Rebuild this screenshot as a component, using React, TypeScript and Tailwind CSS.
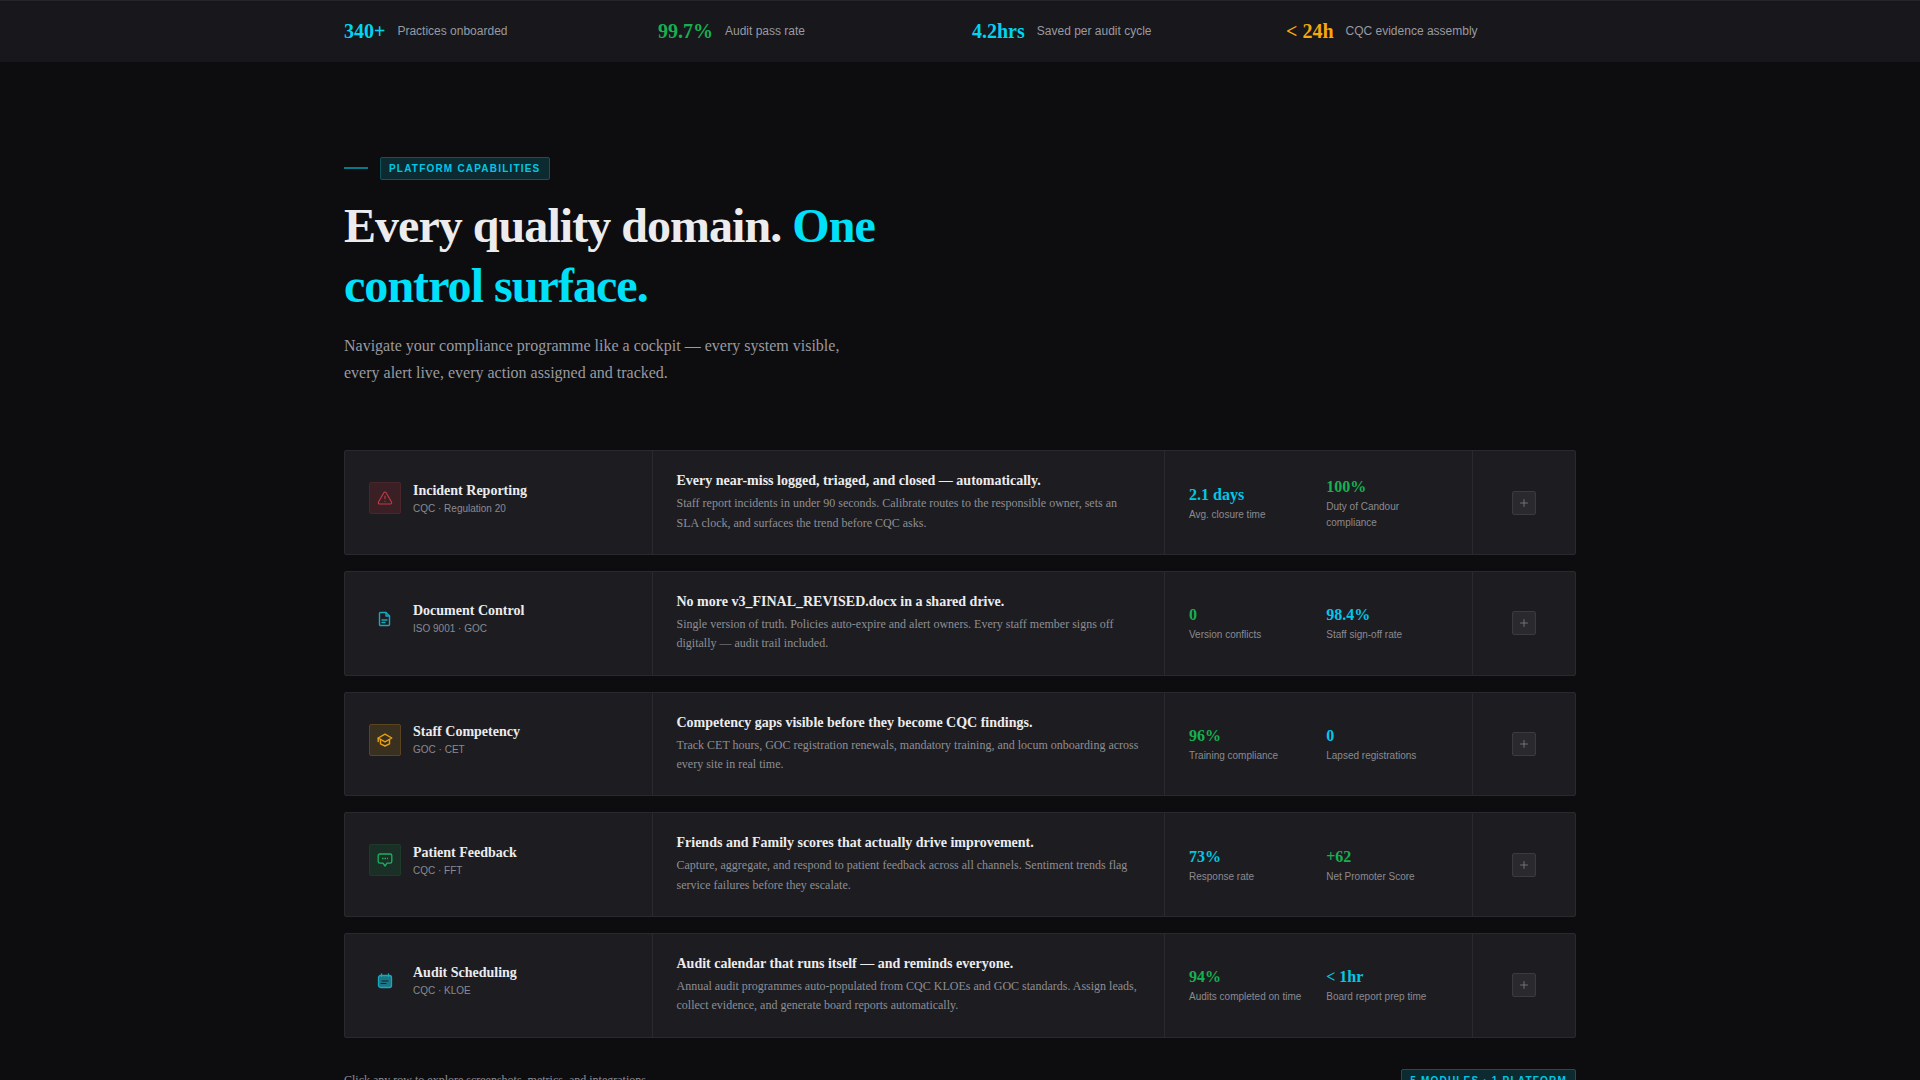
import { TriangleAlert, Plus } from "lucide-react";
import type { ReactNode } from "react";

const SERIF = "font-['Liberation_Serif',serif]";
const SANS = "font-['Liberation_Sans',sans-serif]";

const STATS = [
  { value: "340+", label: "Practices onboarded", color: "text-[#00d4f0]" },
  { value: "99.7%", label: "Audit pass rate", color: "text-[#16b050]" },
  { value: "4.2hrs", label: "Saved per audit cycle", color: "text-[#00d4f0]" },
  { value: "< 24h", label: "CQC evidence assembly", color: "text-[#f5a80c]" },
];

function DocIcon() {
  return (
    <svg width="16" height="16" viewBox="0 0 16 16" fill="none" stroke="currentColor" strokeWidth="1.4" strokeLinejoin="round" strokeLinecap="round">
      <path d="M3.5 1.5h5.5l3.5 3.5v8.5a1 1 0 0 1-1 1h-8a1 1 0 0 1-1-1v-11a1 1 0 0 1 1-1Z" />
      <path d="M9 1.5V5h3.5" />
      <path d="M5 9h5M5 11.5h3" />
    </svg>
  );
}

function CapIcon() {
  return (
    <svg width="16" height="16" viewBox="0 0 16 16" fill="none" stroke="currentColor" strokeWidth="1.4" strokeLinejoin="round" strokeLinecap="round">
      <path d="M1.2 6 8 2.2 14.8 6 8 9.8Z" />
      <path d="M3.5 7.4v4.4L8 14l4.5-2.2V7.4" />
      <path d="M1.2 6v3.5" />
    </svg>
  );
}

function ChatIcon() {
  return (
    <svg width="16" height="16" viewBox="0 0 16 16" fill="none" stroke="currentColor" strokeWidth="1.3" strokeLinejoin="round" strokeLinecap="round">
      <path d="M2.8 2h10.4a1.6 1.6 0 0 1 1.6 1.6v6a1.6 1.6 0 0 1-1.6 1.6H10l-2 2.8-2-2.8H2.8a1.6 1.6 0 0 1-1.6-1.6v-6A1.6 1.6 0 0 1 2.8 2Z" />
      <path d="M5 6.5h6" strokeDasharray="1.5 1" strokeLinecap="butt" />
    </svg>
  );
}

function CalIcon() {
  return (
    <svg width="16" height="16" viewBox="0 0 16 16" fill="none" stroke="currentColor" strokeWidth="1.3" strokeLinejoin="round" strokeLinecap="round">
      <rect x="1.5" y="2.5" width="13" height="12" rx="2" fill="currentColor" fillOpacity="0.65" />
      <path d="M4.5 0.8v2.6M11.5 0.8v2.6" />
      <path d="M5 8h6M4 10.5h5" stroke="#1d1d21" strokeWidth="1" />
    </svg>
  );
}

type Metric = { value: string; label: string; color: string };
type Row = {
  name: string;
  sub: string;
  icon: ReactNode;
  iconBox: string;
  title: string;
  body: string;
  metrics: Metric[];
};

const CYAN = "text-[#00c8e6]";
const GREEN = "text-[#16b050]";

const ROWS: Row[] = [
  {
    name: "Incident Reporting",
    sub: "CQC · Regulation 20",
    icon: <TriangleAlert size={16} strokeWidth={1.75} />,
    iconBox: "bg-[#3a2024] border-[#4a2529] text-[#c03a46]",
    title: "Every near-miss logged, triaged, and closed — automatically.",
    body: "Staff report incidents in under 90 seconds. Calibrate routes to the responsible owner, sets an SLA clock, and surfaces the trend before CQC asks.",
    metrics: [
      { value: "2.1 days", label: "Avg. closure time", color: CYAN },
      { value: "100%", label: "Duty of Candour compliance", color: GREEN },
    ],
  },
  {
    name: "Document Control",
    sub: "ISO 9001 · GOC",
    icon: <DocIcon />,
    iconBox: "bg-transparent border-transparent text-[#1aa6bd]",
    title: "No more v3_FINAL_REVISED.docx in a shared drive.",
    body: "Single version of truth. Policies auto-expire and alert owners. Every staff member signs off digitally — audit trail included.",
    metrics: [
      { value: "0", label: "Version conflicts", color: GREEN },
      { value: "98.4%", label: "Staff sign-off rate", color: CYAN },
    ],
  },
  {
    name: "Staff Competency",
    sub: "GOC · CET",
    icon: <CapIcon />,
    iconBox: "bg-[#3a3020] border-[#5a4520] text-[#e8a010]",
    title: "Competency gaps visible before they become CQC findings.",
    body: "Track CET hours, GOC registration renewals, mandatory training, and locum onboarding across every site in real time.",
    metrics: [
      { value: "96%", label: "Training compliance", color: GREEN },
      { value: "0", label: "Lapsed registrations", color: CYAN },
    ],
  },
  {
    name: "Patient Feedback",
    sub: "CQC · FFT",
    icon: <ChatIcon />,
    iconBox: "bg-[#1a3026] border-[#1e3a2a] text-[#1eb060]",
    title: "Friends and Family scores that actually drive improvement.",
    body: "Capture, aggregate, and respond to patient feedback across all channels. Sentiment trends flag service failures before they escalate.",
    metrics: [
      { value: "73%", label: "Response rate", color: CYAN },
      { value: "+62", label: "Net Promoter Score", color: GREEN },
    ],
  },
  {
    name: "Audit Scheduling",
    sub: "CQC · KLOE",
    icon: <CalIcon />,
    iconBox: "bg-transparent border-transparent text-[#1aa6bd]",
    title: "Audit calendar that runs itself — and reminds everyone.",
    body: "Annual audit programmes auto-populated from CQC KLOEs and GOC standards. Assign leads, collect evidence, and generate board reports automatically.",
    metrics: [
      { value: "94%", label: "Audits completed on time", color: GREEN },
      { value: "< 1hr", label: "Board report prep time", color: CYAN },
    ],
  },
];

function ModuleRow({ row }: { row: Row }) {
  return (
    <div className="grid grid-cols-[3fr_5fr_3fr_1fr] h-[104.67px] rounded-[2px] border border-[#2a2a2e] bg-[#1d1d21]">
      <div className="flex items-center gap-3 pl-6 pb-[9px] border-r border-[#2a2a2e]">
        <div className={`flex h-8 w-8 shrink-0 items-center justify-center rounded-[2px] border ${row.iconBox}`}>{row.icon}</div>
        <div>
          <div className={`${SERIF} text-[14px] leading-[20px] font-bold text-[#ececee]`}>{row.name}</div>
          <div className={`${SANS} text-[10px] leading-[15px] text-[#8a8a90]`}>{row.sub}</div>
        </div>
      </div>
      <div className="flex flex-col justify-center px-6 pb-[1px] border-r border-[#2a2a2e]">
        <div className={`${SERIF} text-[14px] leading-[20px] font-bold text-[#ececee]`}>{row.title}</div>
        <div className={`${SERIF} mt-[3px] text-[12px] leading-[19.5px] text-[#8e8e94]`}>{row.body}</div>
      </div>
      <div className="grid grid-cols-2 items-center gap-x-4 px-6 pt-[2px] border-r border-[#2a2a2e]">
        {row.metrics.map((m) => (
          <div key={m.label}>
            <div className={`${SERIF} text-[16px] leading-[20px] font-bold ${m.color}`}>{m.value}</div>
            <div className={`${SANS} mt-[2px] text-[10px] leading-[16px] text-[#8a8a90]`}>{m.label}</div>
          </div>
        ))}
      </div>
      <div className="flex items-center justify-center">
        <div className="flex h-6 w-6 items-center justify-center rounded-[2px] border border-[#3a3a40] bg-[#2a2a2e] text-[#85858b]">
          <Plus size={12} strokeWidth={1.5} />
        </div>
      </div>
    </div>
  );
}

export default function App() {
  return (
    <div className="h-[1080px] overflow-hidden bg-[#0d0d0f]">
      <div className="h-[62px] pb-[2px] bg-[#17171c] border-t border-[#25252a]">
        <div className="mx-auto grid h-full w-[1232px] grid-cols-[314px_314px_314px_1fr] items-center">
          {STATS.map((s) => (
            <div key={s.label} className="flex items-center gap-3">
              <span className={`${SERIF} text-[20px] font-bold leading-none ${s.color}`}>{s.value}</span>
              <span className={`${SANS} text-[12px] text-[#9a9aa0]`}>{s.label}</span>
            </div>
          ))}
        </div>
      </div>

      <div className="mx-auto w-[1232px] pt-[95px]">
        <div className="flex items-center gap-3">
          <span className="h-px w-6 -translate-y-[0.5px] bg-[#00e5ff]" />
          <span className={`${SANS} rounded-[2px] border border-[#0e5560] bg-[#0c2a30] px-2 py-[3px] text-[10px] leading-[15px] font-bold tracking-[0.12em] text-[#00c8e6]`}>
            PLATFORM CAPABILITIES
          </span>
        </div>
        <h1 className={`${SERIF} mt-4 w-[600px] text-[48px] leading-[60px] font-bold tracking-[-0.02em] text-[#ececee]`}>
          Every quality domain. <span className="text-[#00e0f8]">One control surface.</span>
        </h1>
        <p className={`${SERIF} mt-4 w-[520px] text-[16px] leading-[27.2px] text-[#9a9aa0]`}>
          Navigate your compliance programme like a cockpit — every system visible, every alert live, every action assigned and tracked.
        </p>

        <div className="mt-16 flex flex-col gap-[16px]">
          {ROWS.map((row) => (
            <ModuleRow key={row.name} row={row} />
          ))}
        </div>

        <div className="mt-[31px] flex items-center justify-between">
          <span className={`${SERIF} text-[12px] text-[#8e8e94]`}>Click any row to explore screenshots, metrics, and integrations.</span>
          <span className={`${SANS} rounded-[2px] border border-[#0e5560] bg-[#0c2a30] px-2 py-[3px] text-[10px] leading-[15px] font-bold tracking-[0.12em] text-[#00c8e6]`}>
            5 MODULES · 1 PLATFORM
          </span>
        </div>
      </div>
    </div>
  );
}
